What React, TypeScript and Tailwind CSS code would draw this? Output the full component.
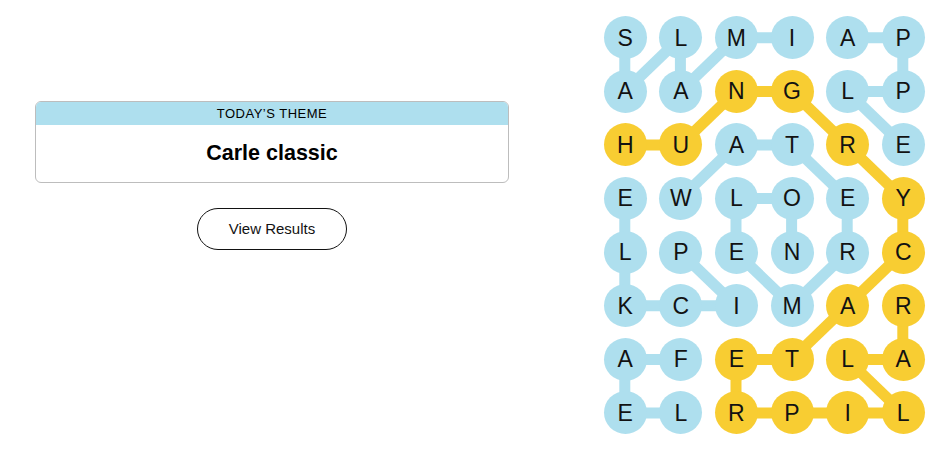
import React from 'react';

const COL_W = 55.6;
const ROW_H = 53.6;

const grid = [
  'SLMIAP',
  'AANGLP',
  'HUATRE',
  'EWLOEY',
  'LPENRC',
  'KCIMAR',
  'AFETLA',
  'ELRPIL',
];

type Cell = [number, number];

// each found word as a path of [row, col]
const words: { path: Cell[]; spangram?: boolean }[] = [
  { path: [[0, 0], [1, 0], [0, 1], [1, 1], [0, 2], [0, 3]] }, // SALAMI
  { path: [[0, 4], [0, 5], [1, 5], [1, 4], [2, 5]] }, // APPLE
  { path: [[3, 1], [2, 2], [2, 3], [3, 4], [4, 4], [5, 3], [4, 2], [3, 2], [3, 3], [4, 3]] }, // WATERMELON
  { path: [[4, 1], [5, 2], [5, 1], [5, 0], [4, 0], [3, 0]] }, // PICKLE
  { path: [[7, 1], [7, 0], [6, 0], [6, 1]] }, // LEAF
  {
    spangram: true,
    path: [
      [2, 0], [2, 1], [1, 2], [1, 3], [2, 4], [3, 5],
      [4, 5], [5, 4], [6, 3], [6, 2], [7, 2], [7, 3], [7, 4], [7, 5], [6, 4], [6, 5], [5, 5],
    ],
  },
];

const BLUE = '#aedfee';
const YELLOW = '#f8cd32';

const spangramCells = new Set(
  words.filter((w) => w.spangram).flatMap((w) => w.path.map(([r, c]) => `${r}-${c}`))
);

const cx = (c: number) => c * COL_W + COL_W / 2;
const cy = (r: number) => r * ROW_H + ROW_H / 2;

const Board: React.FC = () => (
  <div className="relative">
    <svg
      className="absolute inset-0"
      width={COL_W * 6}
      height={ROW_H * 8}
      viewBox={`0 0 ${COL_W * 6} ${ROW_H * 8}`}
    >
      {words.map((w, i) =>
        w.path.slice(1).map(([r, c], j) => {
          const [pr, pc] = w.path[j];
          return (
            <line
              key={`${i}-${j}`}
              x1={cx(pc)}
              y1={cy(pr)}
              x2={cx(c)}
              y2={cy(r)}
              stroke={w.spangram ? YELLOW : BLUE}
              strokeWidth={11}
            />
          );
        })
      )}
    </svg>
    <div className="relative grid grid-cols-[repeat(6,55.6px)] grid-rows-[repeat(8,53.6px)]">
      {grid.map((row, r) =>
        row.split('').map((ch, c) => (
          <div key={`${r}-${c}`} className="flex items-center justify-center">
            <div
              className={`flex h-[43px] w-[43px] items-center justify-center rounded-full text-[23px] text-[#121212] ${
                spangramCells.has(`${r}-${c}`) ? 'bg-[#f8cd32]' : 'bg-[#aedfee]'
              }`}
            >
              {ch}
            </div>
          </div>
        ))
      )}
    </div>
  </div>
);

export default function App() {
  return (
    <div className="flex h-[450px] w-[931px] bg-white font-['Liberation_Sans',Arial,sans-serif] text-[#121212]">
      <div className="flex w-[544px] flex-col items-center px-[35px] pt-[101px]">
        <div className="w-full overflow-hidden rounded-md border border-[#bdbdbd]">
          <div className="flex h-[23px] items-center justify-center bg-[#aedfee] text-[13px] tracking-[0.5px] text-black">
            TODAY’S THEME
          </div>
          <div className="flex h-[57px] items-center justify-center text-[21.5px] font-bold text-black">
            Carle classic
          </div>
        </div>
        <button className="mt-[25px] h-[42px] w-[150px] rounded-full border border-[#121212] text-[15px]">
          View Results
        </button>
      </div>
      <div className="ml-auto pt-[11px]">
        <Board />
      </div>
    </div>
  );
}
